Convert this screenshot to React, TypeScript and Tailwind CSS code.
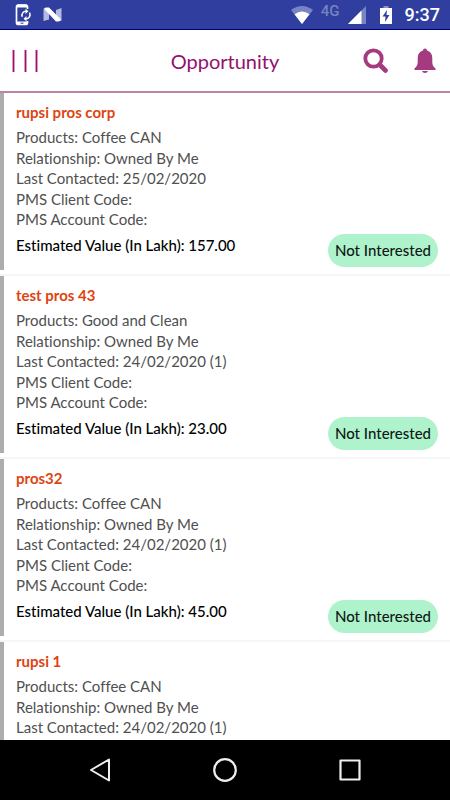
import React from "react";

type Opportunity = {
  name: string;
  products: string;
  lastContacted: string;
  value: string;
};

const opportunities: Opportunity[] = [
  { name: "rupsi pros corp", products: "Coffee CAN", lastContacted: "25/02/2020", value: "157.00" },
  { name: "test pros 43", products: "Good and Clean", lastContacted: "24/02/2020 (1)", value: "23.00" },
  { name: "pros32", products: "Coffee CAN", lastContacted: "24/02/2020 (1)", value: "45.00" },
  { name: "rupsi 1", products: "Coffee CAN", lastContacted: "24/02/2020 (1)", value: "45.00" },
];

function StatusBar() {
  return (
    <div className="flex h-[30px] shrink-0 items-center justify-between border-b border-[#00007c] bg-[#303f9f] pr-[10px] pl-[15px] text-white">
      <div className="flex items-center gap-[11px]">
        <svg className="h-[22px] w-[17px]" viewBox="0 0 17 22" fill="none" aria-hidden="true">
          <path d="M12.5 5V3a2 2 0 0 0-2-2h-7a2 2 0 0 0-2 2v15.5a2 2 0 0 0 2 2h7a2 2 0 0 0 2-2V17" stroke="white" strokeWidth="1.7" />
          <path d="M2 2h10M2 19h10" stroke="white" strokeWidth="3" />
          <path d="M5.5 19.2h3" stroke="#303f9f" strokeWidth="1" />
          <path d="M7.2 12.7a4 4 0 0 1 4-5.4M14.5 8.7a4 4 0 0 1-3.7 6" stroke="white" strokeWidth="1.5" />
          <path d="m10.5 4.7 3 2.6-3 2.6zM11.5 12.1l-3 2.6 3 2.6z" fill="white" />
        </svg>
        <svg className="h-4 w-[19px]" viewBox="0 0 19 16" aria-hidden="true">
          <path d="M.5 1.5 6 5v7.500L.5 14zM18.500 1v13L13 11V3z" fill="#b4bbe2" />
          <path d="M1 1.800Q1.500.5 3.500.5H6L18 12.500Q17.500 14.500 15.500 14.500H13z" fill="white" />
        </svg>
      </div>
      <div className="flex h-full items-center">
        <svg className="mr-2 h-[18px] w-[22px]" viewBox="0 0 22 18" aria-hidden="true">
          <path d="M0 4Q11-4 22 4L11 18z" fill="#7984c3" />
          <path d="M3.500 8.300Q11 2.800 18.500 8.300L11 18z" fill="white" />
        </svg>
        <span className="mr-2 mb-2 font-[Roboto,sans-serif] text-[15px] leading-5 font-medium text-[#7782c2]">4G</span>
        <svg className="mr-[14px] h-[18px] w-[18px]" viewBox="0 0 18 18" aria-hidden="true">
          <path d="M18 0v18H0z" fill="#7984c3" />
          <path d="M13.500 4.500V18H0z" fill="white" />
        </svg>
        <svg className="mr-[13px] h-[18px] w-3" viewBox="0 0 12 18" aria-hidden="true">
          <path d="M3.500 0h5v2H12v3H0V2h3.500z" fill="#8992ca" />
          <path d="M0 2h12v16H0z" fill="white" />
          <path d="M7 4 2.500 10.500h3L5 16l4.500-7h-3z" fill="#303f9f" />
        </svg>
        <time className="font-[Roboto,sans-serif] text-lg leading-6 font-medium">9:37</time>
      </div>
    </div>
  );
}

function Header() {
  return (
    <header className="grid h-[63px] shrink-0 grid-cols-[1fr_auto_1fr] items-center border-b-2 border-[#bd85a5] px-3">
      <button type="button" aria-label="Menu" className="flex h-[22px] w-[26px] justify-between">
        <span className="w-[3px] border-x border-[#d898bd] bg-[#9c0f73]" />
        <span className="w-[3px] border-x border-[#d898bd] bg-[#9c0f73]" />
        <span className="w-[3px] border-x border-[#d898bd] bg-[#9c0f73]" />
      </button>
      <h1 className="text-xl leading-6 text-[#93116e]">Opportunity</h1>
      <div className="flex items-center justify-end gap-[26px] pr-[2px]">
        <button type="button" aria-label="Search">
          <svg className="block h-[25px] w-[25px]" viewBox="0 0 25 25" fill="none" stroke="#a43a80" aria-hidden="true">
            <circle cx="10.500" cy="10.500" r="8.200" strokeWidth="3.800" />
            <path d="m17 17 5.500 5.500" strokeWidth="4.600" strokeLinecap="round" />
          </svg>
        </button>
        <button type="button" aria-label="Notifications">
          <svg className="block h-[25px] w-[22px]" viewBox="0 0 22 25" fill="#a43a80" aria-hidden="true">
            <path d="M9 2.500a2 2 0 0 1 4 0c3.400 1 5.300 3.700 5.300 7.500v3.500c0 4 1.200 5.300 3.200 7v1.500H.5v-1.500c2-1.700 3.200-3 3.200-7V10C3.700 6.200 5.600 3.500 9 2.500z" />
            <path d="M8 23h6c-.6 1.300-1.500 2-3 2s-2.400-.7-3-2z" />
          </svg>
        </button>
      </div>
    </header>
  );
}

function Card({ item }: { item: Opportunity }) {
  return (
    <li className="border-b-2 border-[#f6f6f6] pb-1">
      <article className="border-l-4 border-[#adadad] pt-[9px] pr-3 pb-[3px] pl-3">
        <h2 className="text-[15px] leading-5 font-bold text-[#de4411]">{item.name}</h2>
        <div className="mt-[5px] grid h-[102px] content-between text-[15px] leading-5 text-[#505050]">
          <p>Products: {item.products}</p>
          <p>Relationship: Owned By Me</p>
          <p>Last Contacted: {item.lastContacted}</p>
          <p>PMS Client Code:</p>
          <p>PMS Account Code:</p>
        </div>
        <div className="mt-[5px] flex items-start justify-between">
          <p className="text-[15px] leading-[22px] font-medium text-black">Estimated Value (In Lakh): {item.value}</p>
          <span className="flex h-[33px] w-[110px] items-center justify-center rounded-full bg-[#aff3cd] text-[15px] font-medium text-[#101a15]">
            Not Interested
          </span>
        </div>
      </article>
    </li>
  );
}

function NavigationBar() {
  return (
    <nav className="flex h-[60px] shrink-0 items-center justify-center gap-[101px] bg-black">
      <button type="button" aria-label="Back">
        <svg className="block h-6 w-6" viewBox="0 0 24 24" fill="none" stroke="#eee" strokeWidth="2" strokeLinejoin="round" aria-hidden="true">
          <path d="M21 1.500v21L3 12z" />
        </svg>
      </button>
      <button type="button" aria-label="Home">
        <svg className="block h-6 w-6" viewBox="0 0 24 24" fill="none" stroke="#eee" strokeWidth="2.200" aria-hidden="true">
          <circle cx="12" cy="12" r="10.800" />
        </svg>
      </button>
      <button type="button" aria-label="Recent apps">
        <svg className="block h-6 w-6" viewBox="0 0 24 24" fill="none" stroke="#eee" strokeWidth="2.200" strokeLinejoin="round" aria-hidden="true">
          <path d="M2.500 2.500h19v19h-19z" />
        </svg>
      </button>
    </nav>
  );
}

export default function App() {
  return (
    <div className="flex h-screen flex-col overflow-hidden bg-white font-[Lato,sans-serif] [font-variant-ligatures:none]">
      <StatusBar />
      <Header />
      <main className="min-h-0 flex-1 overflow-y-auto [scrollbar-width:none]">
        <ul>
          {opportunities.map((item) => (
            <Card key={item.name} item={item} />
          ))}
        </ul>
      </main>
      <NavigationBar />
    </div>
  );
}
